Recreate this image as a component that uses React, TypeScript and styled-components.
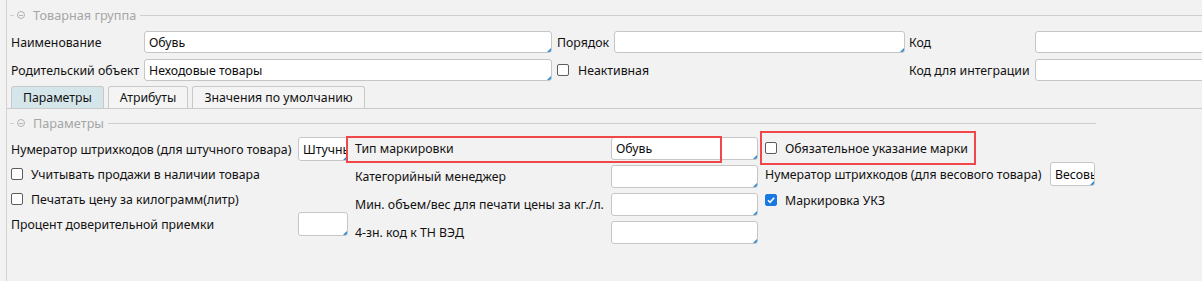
import React from 'react';
import styled, { createGlobalStyle } from 'styled-components';

const GlobalStyle = createGlobalStyle`
  html, body {
    margin: 0;
    padding: 0;
    background: #f2f2f2;
  }
  body {
    font-family: "Noto Sans", "Open Sans", sans-serif;
    font-size: 12.3px;
    color: #111;
  }
`;

const Page = styled.div`
  margin-left: 6px;
  height: 281px;
  border-left: 1px solid #d2d2d2;
  padding-left: 4px;
  overflow: hidden;
  box-sizing: border-box;
`;

const LegendRow = styled.div<{ $top: number; $width?: number }>`
  display: flex;
  align-items: center;
  height: 14px;
  margin-top: ${p => p.$top}px;
  margin-left: -1px;
  width: ${p => (p.$width ? `${p.$width}px` : 'auto')};
  color: #a6a6a6;
  font-size: 12.7px;
`;

const LegendDash = styled.span`
  width: 4px;
  height: 1px;
  background: #cfcfcf;
  margin-right: 3px;
`;

const LegendIcon = styled.span`
  width: 8px;
  height: 8px;
  border: 1px solid #b4b4b4;
  border-radius: 50%;
  box-sizing: border-box;
  display: flex;
  align-items: center;
  justify-content: center;
  margin-right: 8px;
  &::before {
    content: '';
    width: 4px;
    height: 1px;
    background: #b4b4b4;
  }
`;

const LegendLine = styled.span`
  flex: 1;
  height: 1px;
  background: #cfcfcf;
  margin-left: 4px;
`;

const TopGrid = styled.div`
  display: grid;
  grid-template-columns: 133px 408px 62px 291px 130px 1fr;
  grid-auto-rows: 22px;
  row-gap: 6px;
  margin-top: 9px;
  align-items: center;
`;

const Label = styled.span<{ $pad?: number }>`
  padding-left: ${p => p.$pad ?? 0}px;
  white-space: nowrap;
`;

const Field = styled.div<{ $w?: number; $h?: number; $corner?: boolean }>`
  position: relative;
  width: ${p => (p.$w ? `${p.$w}px` : '100%')};
  height: ${p => p.$h ?? 22}px;
  box-sizing: border-box;
  background: #fff;
  border: 1px solid #c6c6c6;
  border-radius: 3px;
  padding: 0 4px;
  display: flex;
  align-items: center;
  white-space: nowrap;
  overflow: hidden;
  color: #0d0d0d;
  &::after {
    content: '';
    display: ${p => (p.$corner ? 'block' : 'none')};
    position: absolute;
    right: 0;
    bottom: 0;
    width: 0;
    height: 0;
    border-left: 4px solid transparent;
    border-bottom: 4px solid #2a8ad2;
  }
`;

const CheckRow = styled.label<{ $pad?: number; $gap?: number }>`
  display: flex;
  align-items: center;
  gap: ${p => p.$gap ?? 8}px;
  padding-left: ${p => p.$pad ?? 0}px;
  white-space: nowrap;
`;

const Box = styled.span<{ $checked?: boolean }>`
  width: 12px;
  height: 12px;
  box-sizing: border-box;
  border-radius: 2px;
  border: 1px solid ${p => (p.$checked ? '#1a78e0' : '#5c5c5c')};
  background: ${p => (p.$checked ? '#1a78e0' : '#fff')};
  display: flex;
  align-items: center;
  justify-content: center;
  flex-shrink: 0;
`;

const Checkbox: React.FC<{ checked?: boolean }> = ({ checked }) => (
  <Box $checked={checked}>
    {checked && (
      <svg width="10" height="10" viewBox="0 0 10 10">
        <path d="M2 5.2 L4.1 7.3 L8.2 2.8" fill="none" stroke="#fff" strokeWidth="1.6" />
      </svg>
    )}
  </Box>
);

const Tabs = styled.div`
  display: flex;
  gap: 4px;
  margin-top: 5px;
  height: 22px;
`;

const Tab = styled.div<{ $active?: boolean }>`
  box-sizing: border-box;
  height: 22px;
  padding: 0 11px;
  display: flex;
  align-items: center;
  border: 1px solid #c9c9c9;
  border-bottom: none;
  border-radius: 3px 3px 0 0;
  background: ${p => (p.$active ? '#d5e6eb' : '#f4f4f4')};
`;

const TabPanel = styled.div`
  border-top: 1px solid #cbcbcb;
  margin-left: -4px;
  padding-left: 4px;
`;

const Columns = styled.div`
  display: flex;
  gap: 7px;
  margin-top: 7px;
`;

const Column = styled.div<{ $width: number; $gap: number; $top?: number }>`
  width: ${p => p.$width}px;
  display: flex;
  flex-direction: column;
  gap: ${p => p.$gap}px;
  margin-top: ${p => p.$top ?? 0}px;
`;

const FormRow = styled.div<{ $h: number; $label?: number }>`
  position: relative;
  height: ${p => p.$h}px;
  display: flex;
  align-items: center;
  & > ${Label} {
    width: ${p => p.$label ?? 0}px;
    flex-shrink: 0;
  }
`;

const Highlight = styled.div<{ $l: number; $t: number; $w: number; $h: number }>`
  position: absolute;
  left: ${p => p.$l}px;
  top: ${p => p.$t}px;
  width: ${p => p.$w}px;
  height: ${p => p.$h}px;
  border: 2px solid #f0474b;
  box-sizing: border-box;
  pointer-events: none;
`;

const Legend: React.FC<{ title: string; top: number; width?: number }> = ({ title, top, width }) => (
  <LegendRow $top={top} $width={width}>
    <LegendDash />
    <LegendIcon />
    <span>{title}</span>
    <LegendLine />
  </LegendRow>
);

export default function App() {
  return (
    <>
      <GlobalStyle />
      <Page>
        <Legend title="Товарная группа" top={8} />
        <TopGrid>
          <Label>Наименование</Label>
          <Field $corner>Обувь</Field>
          <Label $pad={5}>Порядок</Label>
          <Field $corner />
          <Label $pad={4}>Код</Label>
          <Field $w={220} />

          <Label>Родительский объект</Label>
          <Field $corner>Неходовые товары</Field>
          <CheckRow $pad={5} $gap={9}>
            <Checkbox />
            Неактивная
          </CheckRow>
          <span />
          <Label $pad={4}>Код для интеграции</Label>
          <Field $w={220} />
        </TopGrid>

        <Tabs>
          <Tab $active>Параметры</Tab>
          <Tab>Атрибуты</Tab>
          <Tab>Значения по умолчанию</Tab>
        </Tabs>

        <TabPanel>
          <Legend title="Параметры" top={7} width={1086} />
          <Columns>
            <Column $width={337} $gap={1}>
              <FormRow $h={24} $label={287}>
                <Label>Нумератор штрихкодов (для штучного товара)</Label>
                <Field $w={50} $h={24} $corner>Штучный</Field>
              </FormRow>
              <FormRow $h={24}>
                <CheckRow>
                  <Checkbox />
                  Учитывать продажи в наличии товара
                </CheckRow>
              </FormRow>
              <FormRow $h={24}>
                <CheckRow>
                  <Checkbox />
                  Печатать цену за килограмм(литр)
                </CheckRow>
              </FormRow>
              <FormRow $h={24} $label={287}>
                <Label>Процент доверительной приемки</Label>
                <Field $w={50} $h={24} $corner />
              </FormRow>
            </Column>

            <Column $width={403} $gap={5}>
              <FormRow $h={23} $label={256}>
                <Label>Тип маркировки</Label>
                <Field $w={147} $h={23} $corner>Обувь</Field>
                <Highlight $l={-9} $t={-1} $w={376} $h={27} />
              </FormRow>
              <FormRow $h={23} $label={256}>
                <Label>Категорийный менеджер</Label>
                <Field $w={147} $h={23} $corner />
              </FormRow>
              <FormRow $h={23} $label={256}>
                <Label>Мин. объем/вес для печати цены за кг./л.</Label>
                <Field $w={147} $h={23} $corner />
              </FormRow>
              <FormRow $h={23} $label={256}>
                <Label>4-зн. код к ТН ВЭД</Label>
                <Field $w={147} $h={23} $corner />
              </FormRow>
            </Column>

            <Column $width={330} $gap={2} $top={-1}>
              <FormRow $h={24}>
                <CheckRow>
                  <Checkbox />
                  Обязательное указание марки
                </CheckRow>
                <Highlight $l={-5} $t={-5} $w={216} $h={34} />
              </FormRow>
              <FormRow $h={24} $label={285}>
                <Label>Нумератор штрихкодов (для весового товара)</Label>
                <Field $w={45} $h={24} $corner>Весовые</Field>
              </FormRow>
              <FormRow $h={24}>
                <CheckRow>
                  <Checkbox checked />
                  Маркировка УКЗ
                </CheckRow>
              </FormRow>
            </Column>
          </Columns>
        </TabPanel>
      </Page>
    </>
  );
}
